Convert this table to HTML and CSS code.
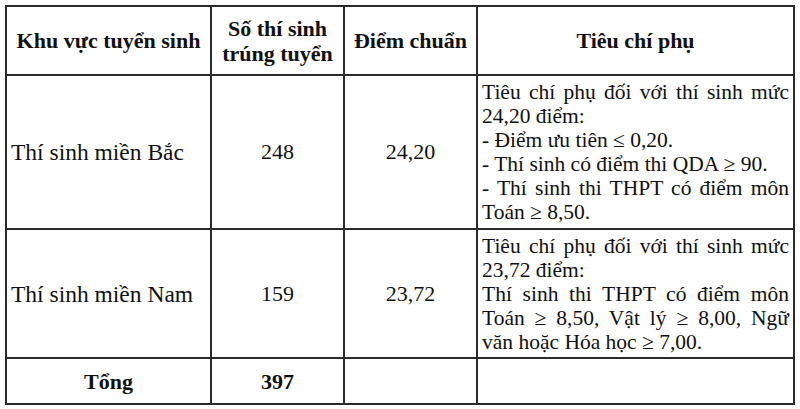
FILE: index.html
```html
<!DOCTYPE html>
<html lang="vi">
<head>
<meta charset="utf-8">
<link rel="stylesheet" href="styles.css">
</head>
<body>
<table class="grid">
  <colgroup>
    <col class="c1"><col class="c2"><col class="c3"><col class="c4">
  </colgroup>
  <tr class="head">
    <th>Khu vực tuyển sinh</th>
    <th>Số thí sinh<br>trúng tuyển</th>
    <th>Điểm chuẩn</th>
    <th>Tiêu chí phụ</th>
  </tr>
  <tr class="r1">
    <td class="left">Thí sinh miền Bắc</td>
    <td class="center">248</td>
    <td class="center">24,20</td>
    <td class="just">Tiêu chí phụ đối với thí sinh mức 24,20 điểm:<br>- Điểm ưu tiên ≤ 0,20.<br>- Thí sinh có điểm thi QDA ≥ 90.<br>- Thí sinh thi THPT có điểm môn Toán ≥ 8,50.</td>
  </tr>
  <tr class="r2">
    <td class="left">Thí sinh miền Nam</td>
    <td class="center">159</td>
    <td class="center">23,72</td>
    <td class="just">Tiêu chí phụ đối với thí sinh mức 23,72 điểm:<br>Thí sinh thi THPT có điểm môn Toán ≥ 8,50, Vật lý ≥ 8,00, Ngữ văn hoặc Hóa học ≥ 7,00.</td>
  </tr>
  <tr class="total">
    <th>Tổng</th>
    <th>397</th>
    <td></td>
    <td></td>
  </tr>
</table>
</body>
</html>
```
FILE: styles.css
```css
html, body {
  margin: 0;
  padding: 0;
  background: #ffffff;
}
body {
  padding: 5px 0 0 5px;
  font-family: "Liberation Serif", "Times New Roman", serif;
  color: #111;
}
.grid {
  border-collapse: collapse;
  table-layout: fixed;
  width: 788px;
  font-size: 22px;
  line-height: 24px;
}
.c1 { width: 205px; }
.c2 { width: 133px; }
.c3 { width: 133px; }
.c4 { width: 317px; }
.grid th, .grid td {
  border: 2px solid #2a2a2a;
  padding: 0 4px;
  vertical-align: middle;
}
.grid th {
  font-weight: bold;
  font-size: 22px;
  line-height: 25px;
  text-align: center;
}
.head { height: 69px; }
.r1 { height: 154px; }
.r2 { height: 129px; }
.total { height: 46px; }
.left { text-align: left; padding-left: 10px; font-size: 23.5px; }
.center { text-align: center; }
.just { text-align: justify; padding: 2px 3px 2px 4px; font-size: 21.5px; }
```
